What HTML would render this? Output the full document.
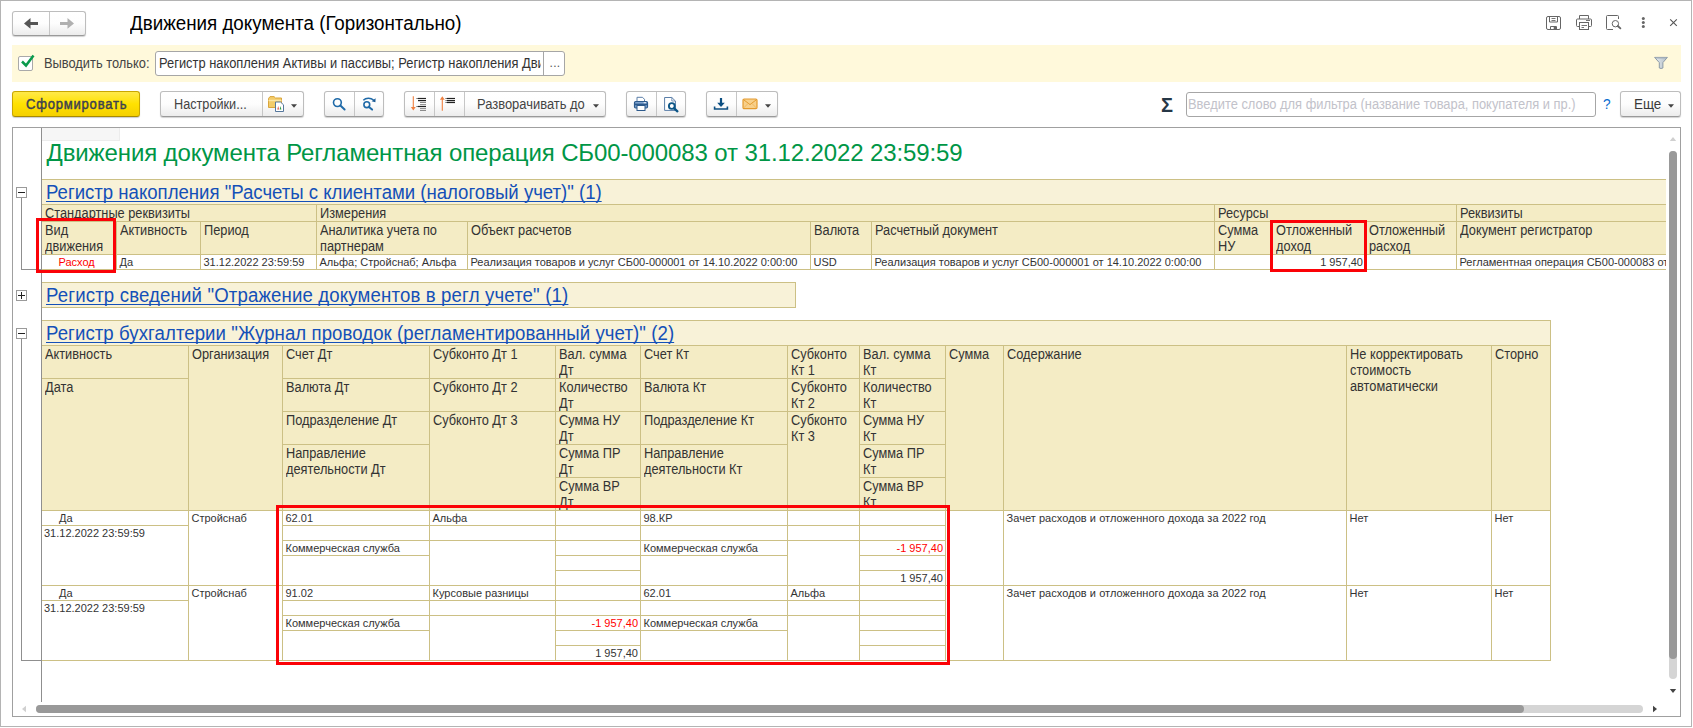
<!DOCTYPE html><html lang="ru"><head><meta charset="utf-8"><title>Движения документа (Горизонтально)</title><style>
html,body{margin:0;padding:0;background:#fff;}
body{width:1693px;height:728px;position:relative;overflow:hidden;font-family:"Liberation Sans",sans-serif;}
div,span,svg{position:absolute;box-sizing:border-box;}
.btn{border:1px solid #bdbdbd;border-bottom-color:#9a9a9a;border-radius:3px;background:linear-gradient(#ffffff 0%,#fdfdfd 50%,#ececec 100%);box-shadow:0 1px 1px rgba(0,0,0,0.18);}
.sep{background:#c6c6c6;width:1px;}
.ui{font-size:14px;color:#333;white-space:nowrap;line-height:16px;transform-origin:0 0;transform:scaleX(0.915);}
.c{overflow:hidden;white-space:nowrap;}
.h{background:#f4ecc5;color:#333;overflow:hidden;}
.h span{position:static;display:block;white-space:nowrap;font-size:14px;line-height:16px;transform-origin:0 0;transform:scaleX(0.913);}
.d{background:#fff;font-size:11px;line-height:13px;color:#333;overflow:hidden;white-space:nowrap;}
.ln{background:#ccc085;}
.lnk{font-size:19.5px;color:#1450b8;text-decoration-skip-ink:none;white-space:nowrap;text-decoration:underline;text-decoration-thickness:1px;text-underline-offset:2px;line-height:22px;}
.red{color:#ff0000;}
</style></head><body>
<div style="left:0px;top:0px;width:1692px;height:727px;border:1px solid #b4b4b4;"></div>
<div class="btn" style="left:12px;top:11px;width:74px;height:25px;"></div>
<div class="sep" style="left:49px;top:12px;width:1px;height:23px;"></div>
<svg style="left:22px;top:16px" width="18" height="14" viewBox="0 0 18 14"><path d="M2 7.4 L8.5 2 V5.9 H16 V8.9 H8.5 V12.8 Z" fill="#555"/></svg>
<svg style="left:58px;top:16px" width="18" height="14" viewBox="0 0 18 14"><path d="M16 7.4 L9.5 2 V5.9 H2 V8.9 H9.5 V12.8 Z" fill="#b0b0b0"/></svg>
<div style="left:130px;top:11px;width:600px;height:24px;font-size:19.5px;line-height:24px;color:#000;white-space:nowrap;transform-origin:0 0;transform:scaleX(0.9626);">Движения документа (Горизонтально)</div>
<div style="left:12px;top:45px;width:1669px;height:37px;background:#fff9db;"></div>
<div style="left:18px;top:56px;width:15px;height:15px;background:#fff;border:1px solid #a9a9a9;border-radius:2px;"></div>
<svg style="left:19px;top:53px" width="18" height="16" viewBox="0 0 18 16"><path d="M3 8.5 L7 12.5 L14.5 2.5" fill="none" stroke="#0a9a4c" stroke-width="2.5"/></svg>
<div class="ui" style="left:43.6px;top:55px;width:130px;height:16px;transform:scaleX(0.918);color:#444;">Выводить только:</div>
<div style="left:155px;top:51px;width:410px;height:25px;background:#fff;border:1px solid #a6a6a6;border-radius:3px;"></div>
<div style="left:543px;top:52px;width:1px;height:23px;background:#a6a6a6;"></div>
<div class="ui" style="left:159px;top:55px;width:415.3px;height:16px;overflow:hidden;transform:scaleX(0.9197);">Регистр накопления Активы и пассивы; Регистр накопления Движения</div>
<div class="ui" style="left:549.6px;top:55px;width:14px;height:16px;transform:none;font-size:12px;letter-spacing:0.3px;color:#555;">...</div>
<div style="left:12px;top:91px;width:128px;height:26px;border:1px solid #c9a700;border-bottom-color:#a88a00;border-radius:3px;background:linear-gradient(#ffe94a 0%,#ffe100 50%,#f5d000 100%);box-shadow:0 1px 1px rgba(0,0,0,0.2);"></div>
<div class="ui" style="left:26.4px;top:96px;width:128px;height:16px;transform:scaleX(0.93);color:#3c4150;letter-spacing:0.85px;-webkit-text-stroke:0.45px #3c4150;">Сформировать</div>
<div class="btn" style="left:160px;top:91px;width:144px;height:26px;"></div>
<div class="sep" style="left:262px;top:92px;width:1px;height:24px;"></div>
<div class="ui" style="left:174.2px;top:96px;width:90px;height:16px;transform:scaleX(0.905);color:#444;">Настройки...</div>
<div class="btn" style="left:324px;top:91px;width:60px;height:26px;"></div>
<div class="sep" style="left:354px;top:92px;width:1px;height:24px;"></div>
<div class="btn" style="left:404px;top:91px;width:202px;height:26px;"></div>
<div class="sep" style="left:434px;top:92px;width:1px;height:24px;"></div>
<div class="sep" style="left:464px;top:92px;width:1px;height:24px;"></div>
<div class="ui" style="left:477.2px;top:96px;width:130px;height:16px;transform:scaleX(0.924);color:#444;">Разворачивать до</div>
<div class="btn" style="left:626px;top:91px;width:60px;height:26px;"></div>
<div class="sep" style="left:656px;top:92px;width:1px;height:24px;"></div>
<div class="btn" style="left:706px;top:91px;width:72px;height:26px;"></div>
<div class="sep" style="left:736px;top:92px;width:1px;height:24px;"></div>
<div style="left:1161px;top:93px;width:14px;height:24px;font-size:20px;font-weight:bold;line-height:24px;color:#263746;">Σ</div>
<div style="left:1186px;top:92px;width:410px;height:25px;background:#fff;border:1px solid #a6a6a6;border-radius:3px;"></div>
<div class="ui" style="left:1188.2px;top:96px;width:440px;height:16px;color:#c2c2ca;transform:scaleX(0.92);">Введите слово для фильтра (название товара, покупателя и пр.)</div>
<div class="ui" style="left:1602.5px;top:96px;width:10px;height:16px;color:#0a6ccf;transform:scaleX(0.98);">?</div>
<div class="btn" style="left:1620px;top:91px;width:61px;height:26px;"></div>
<div class="ui" style="left:1633.6px;top:96px;width:30px;height:16px;transform:scaleX(0.96);color:#3a3a3a;">Еще</div>
<div style="left:12px;top:127px;width:1669px;height:590px;border:1px solid #a0a0a0;background:#fff;"></div>
<div id="sheet" style="left:0;top:0;width:1666px;height:702px;overflow:hidden;">
<div style="left:42px;top:128px;width:78px;height:13px;background:#f6f6f6;border-right:1px solid #ececec;border-bottom:1px solid #ececec;"></div>
<div style="left:46.5px;top:138.18px;font-size:24px;line-height:29px;white-space:nowrap;color:#009646;letter-spacing:-0.113px;">Движения документа Регламентная операция СБ00-000083 от 31.12.2022 23:59:59</div>
<div style="left:42px;top:179px;width:1759px;height:26px;background:#ccc085;"></div>
<div style="left:42px;top:180px;width:1758px;height:24px;background:#f8f2d8;"></div>
<div class="lnk" style="left:46.3px;top:181.14px;font-size:19.5px;line-height:22px;white-space:nowrap;letter-spacing:-0.017px;transform-origin:0 0;transform:scaleX(0.954);">Регистр накопления "Расчеты с клиентами (налоговый учет)" (1)</div>
<div style="left:42px;top:204px;width:1800px;height:66px;background:#ccc085;"></div>
<div class="h" style="left:42px;top:205px;width:274px;height:16px;padding:0px 0px 0 3px;"><span>Стандартные реквизиты</span></div>
<div class="h" style="left:317px;top:205px;width:897px;height:16px;padding:0px 0px 0 3px;"><span>Измерения</span></div>
<div class="h" style="left:1215px;top:205px;width:241px;height:16px;padding:0px 0px 0 3px;"><span>Ресурсы</span></div>
<div class="h" style="left:1457px;top:205px;width:343px;height:16px;padding:0px 0px 0 3px;"><span>Реквизиты</span></div>
<div class="h" style="left:42px;top:222px;width:74px;height:32px;padding:0px 0px 0 3px;"><span>Вид<br>движения</span></div>
<div class="d" style="left:42px;top:255px;width:74px;height:14px;padding:1px 2px 0 2.5px;"><span class="red" style="position:static;padding-left:14px">Расход</span></div>
<div class="h" style="left:117px;top:222px;width:83px;height:32px;padding:0px 0px 0 3px;"><span>Активность</span></div>
<div class="d" style="left:117px;top:255px;width:83px;height:14px;padding:1px 2px 0 2.5px;">Да</div>
<div class="h" style="left:201px;top:222px;width:115px;height:32px;padding:0px 0px 0 3px;"><span>Период</span></div>
<div class="d" style="left:201px;top:255px;width:115px;height:14px;padding:1px 2px 0 2.5px;">31.12.2022 23:59:59</div>
<div class="h" style="left:317px;top:222px;width:150px;height:32px;padding:0px 0px 0 3px;"><span>Аналитика учета по<br>партнерам</span></div>
<div class="d" style="left:317px;top:255px;width:150px;height:14px;padding:1px 2px 0 2.5px;">Альфа; Стройснаб; Альфа</div>
<div class="h" style="left:468px;top:222px;width:342px;height:32px;padding:0px 0px 0 3px;"><span>Объект расчетов</span></div>
<div class="d" style="left:468px;top:255px;width:342px;height:14px;padding:1px 2px 0 2.5px;">Реализация товаров и услуг СБ00-000001 от 14.10.2022 0:00:00</div>
<div class="h" style="left:811px;top:222px;width:60px;height:32px;padding:0px 0px 0 3px;"><span>Валюта</span></div>
<div class="d" style="left:811px;top:255px;width:60px;height:14px;padding:1px 2px 0 2.5px;">USD</div>
<div class="h" style="left:872px;top:222px;width:342px;height:32px;padding:0px 0px 0 3px;"><span>Расчетный документ</span></div>
<div class="d" style="left:872px;top:255px;width:342px;height:14px;padding:1px 2px 0 2.5px;">Реализация товаров и услуг СБ00-000001 от 14.10.2022 0:00:00</div>
<div class="h" style="left:1215px;top:222px;width:57px;height:32px;padding:0px 0px 0 3px;"><span>Сумма<br>НУ</span></div>
<div class="d" style="left:1215px;top:255px;width:57px;height:14px;padding:1px 2px 0 2.5px;"></div>
<div class="h" style="left:1273px;top:222px;width:92px;height:32px;padding:0px 0px 0 3px;"><span>Отложенный<br>доход</span></div>
<div class="d" style="left:1273px;top:255px;width:92px;height:14px;padding:1px 2px 0 2.5px;text-align:right;">1 957,40</div>
<div class="h" style="left:1366px;top:222px;width:90px;height:32px;padding:0px 0px 0 3px;"><span>Отложенный<br>расход</span></div>
<div class="d" style="left:1366px;top:255px;width:90px;height:14px;padding:1px 2px 0 2.5px;"></div>
<div class="h" style="left:1457px;top:222px;width:343px;height:32px;padding:0px 0px 0 3px;"><span>Документ регистратор</span></div>
<div class="d" style="left:1457px;top:255px;width:343px;height:14px;padding:1px 2px 0 2.5px;">Регламентная операция СБ00-000083 от 31.12.2022 23:59:59</div>
<div style="left:42px;top:282px;width:754px;height:26px;background:#ccc085;"></div>
<div style="left:42px;top:283px;width:753px;height:24px;background:#f8f2d8;"></div>
<div class="lnk" style="left:46.3px;top:284.14px;font-size:19.5px;line-height:22px;white-space:nowrap;letter-spacing:0.160px;transform-origin:0 0;transform:scaleX(0.954);">Регистр сведений "Отражение документов в регл учете" (1)</div>
<div style="left:42px;top:320px;width:1509px;height:26px;background:#ccc085;"></div>
<div style="left:42px;top:321px;width:1508px;height:24px;background:#f8f2d8;"></div>
<div class="lnk" style="left:46.3px;top:322.14px;font-size:19.5px;line-height:22px;white-space:nowrap;letter-spacing:0.076px;transform-origin:0 0;transform:scaleX(0.954);">Регистр бухгалтерии "Журнал проводок (регламентированный учет)" (2)</div>
<div style="left:42px;top:345px;width:1509px;height:316px;background:#ccc085;"></div>
<div class="h" style="left:42px;top:346px;width:146px;height:32px;padding:0px 0px 0 3px;"><span>Активность</span></div>
<div class="h" style="left:42px;top:379px;width:146px;height:131px;padding:0px 0px 0 3px;"><span>Дата</span></div>
<div class="h" style="left:189px;top:346px;width:93px;height:164px;padding:0px 0px 0 3px;"><span>Организация</span></div>
<div class="h" style="left:283px;top:346px;width:146px;height:32px;padding:0px 0px 0 3px;"><span>Счет Дт</span></div>
<div class="h" style="left:283px;top:379px;width:146px;height:32px;padding:0px 0px 0 3px;"><span>Валюта Дт</span></div>
<div class="h" style="left:283px;top:412px;width:146px;height:32px;padding:0px 0px 0 3px;"><span>Подразделение Дт</span></div>
<div class="h" style="left:283px;top:445px;width:146px;height:65px;padding:0px 0px 0 3px;"><span>Направление<br>деятельности Дт</span></div>
<div class="h" style="left:430px;top:346px;width:125px;height:32px;padding:0px 0px 0 3px;"><span>Субконто Дт 1</span></div>
<div class="h" style="left:430px;top:379px;width:125px;height:32px;padding:0px 0px 0 3px;"><span>Субконто Дт 2</span></div>
<div class="h" style="left:430px;top:412px;width:125px;height:98px;padding:0px 0px 0 3px;"><span>Субконто Дт 3</span></div>
<div class="h" style="left:556px;top:346px;width:84px;height:32px;padding:0px 0px 0 3px;"><span>Вал. сумма<br>Дт</span></div>
<div class="h" style="left:556px;top:379px;width:84px;height:32px;padding:0px 0px 0 3px;"><span>Количество<br>Дт</span></div>
<div class="h" style="left:556px;top:412px;width:84px;height:32px;padding:0px 0px 0 3px;"><span>Сумма НУ<br>Дт</span></div>
<div class="h" style="left:556px;top:445px;width:84px;height:32px;padding:0px 0px 0 3px;"><span>Сумма ПР<br>Дт</span></div>
<div class="h" style="left:556px;top:478px;width:84px;height:32px;padding:0px 0px 0 3px;"><span>Сумма ВР<br>Дт</span></div>
<div class="h" style="left:641px;top:346px;width:146px;height:32px;padding:0px 0px 0 3px;"><span>Счет Кт</span></div>
<div class="h" style="left:641px;top:379px;width:146px;height:32px;padding:0px 0px 0 3px;"><span>Валюта Кт</span></div>
<div class="h" style="left:641px;top:412px;width:146px;height:32px;padding:0px 0px 0 3px;"><span>Подразделение Кт</span></div>
<div class="h" style="left:641px;top:445px;width:146px;height:65px;padding:0px 0px 0 3px;"><span>Направление<br>деятельности Кт</span></div>
<div class="h" style="left:788px;top:346px;width:71px;height:32px;padding:0px 0px 0 3px;"><span>Субконто<br>Кт 1</span></div>
<div class="h" style="left:788px;top:379px;width:71px;height:32px;padding:0px 0px 0 3px;"><span>Субконто<br>Кт 2</span></div>
<div class="h" style="left:788px;top:412px;width:71px;height:98px;padding:0px 0px 0 3px;"><span>Субконто<br>Кт 3</span></div>
<div class="h" style="left:860px;top:346px;width:85px;height:32px;padding:0px 0px 0 3px;"><span>Вал. сумма<br>Кт</span></div>
<div class="h" style="left:860px;top:379px;width:85px;height:32px;padding:0px 0px 0 3px;"><span>Количество<br>Кт</span></div>
<div class="h" style="left:860px;top:412px;width:85px;height:32px;padding:0px 0px 0 3px;"><span>Сумма НУ<br>Кт</span></div>
<div class="h" style="left:860px;top:445px;width:85px;height:32px;padding:0px 0px 0 3px;"><span>Сумма ПР<br>Кт</span></div>
<div class="h" style="left:860px;top:478px;width:85px;height:32px;padding:0px 0px 0 3px;"><span>Сумма ВР<br>Кт</span></div>
<div class="h" style="left:946px;top:346px;width:57px;height:164px;padding:0px 0px 0 3px;"><span>Сумма</span></div>
<div class="h" style="left:1004px;top:346px;width:342px;height:164px;padding:0px 0px 0 3px;"><span>Содержание</span></div>
<div class="h" style="left:1347px;top:346px;width:144px;height:164px;padding:0px 0px 0 3px;"><span>Не корректировать<br>стоимость<br>автоматически</span></div>
<div class="h" style="left:1492px;top:346px;width:58px;height:164px;padding:0px 0px 0 3px;"><span>Сторно</span></div>
<div class="d" style="left:42px;top:511px;width:146px;height:14px;padding:1px 2px 0 17px;">Да</div>
<div class="d" style="left:42px;top:526px;width:146px;height:59px;padding:1px 2px 0 2px;">31.12.2022 23:59:59</div>
<div class="d" style="left:189px;top:511px;width:93px;height:74px;padding:1px 2px 0 2.5px;">Стройснаб</div>
<div class="d" style="left:283px;top:511px;width:146px;height:14px;padding:1px 2px 0 2.5px;">62.01</div>
<div class="d" style="left:283px;top:526px;width:146px;height:14px;padding:1px 2px 0 2.5px;"></div>
<div class="d" style="left:283px;top:541px;width:146px;height:14px;padding:1px 2px 0 2.5px;">Коммерческая служба</div>
<div class="d" style="left:283px;top:556px;width:146px;height:29px;padding:1px 2px 0 2.5px;"></div>
<div class="d" style="left:430px;top:511px;width:125px;height:14px;padding:1px 2px 0 2.5px;">Альфа</div>
<div class="d" style="left:430px;top:526px;width:125px;height:14px;padding:1px 2px 0 2.5px;"></div>
<div class="d" style="left:430px;top:541px;width:125px;height:44px;padding:1px 2px 0 2.5px;"></div>
<div class="d" style="left:556px;top:511px;width:84px;height:14px;padding:1px 2px 0 2.5px;text-align:right;"></div>
<div class="d" style="left:556px;top:526px;width:84px;height:14px;padding:1px 2px 0 2.5px;text-align:right;"></div>
<div class="d" style="left:556px;top:541px;width:84px;height:14px;padding:1px 2px 0 2.5px;text-align:right;"></div>
<div class="d" style="left:556px;top:556px;width:84px;height:14px;padding:1px 2px 0 2.5px;text-align:right;"></div>
<div class="d" style="left:556px;top:571px;width:84px;height:14px;padding:1px 2px 0 2.5px;text-align:right;"></div>
<div class="d" style="left:641px;top:511px;width:146px;height:14px;padding:1px 2px 0 2.5px;">98.КР</div>
<div class="d" style="left:641px;top:526px;width:146px;height:14px;padding:1px 2px 0 2.5px;"></div>
<div class="d" style="left:641px;top:541px;width:146px;height:14px;padding:1px 2px 0 2.5px;">Коммерческая служба</div>
<div class="d" style="left:641px;top:556px;width:146px;height:29px;padding:1px 2px 0 2.5px;"></div>
<div class="d" style="left:788px;top:511px;width:71px;height:14px;padding:1px 2px 0 2.5px;"></div>
<div class="d" style="left:788px;top:526px;width:71px;height:14px;padding:1px 2px 0 2.5px;"></div>
<div class="d" style="left:788px;top:541px;width:71px;height:44px;padding:1px 2px 0 2.5px;"></div>
<div class="d" style="left:860px;top:511px;width:85px;height:14px;padding:1px 2px 0 2.5px;text-align:right;"></div>
<div class="d" style="left:860px;top:526px;width:85px;height:14px;padding:1px 2px 0 2.5px;text-align:right;"></div>
<div class="d" style="left:860px;top:541px;width:85px;height:14px;padding:1px 2px 0 2.5px;text-align:right;"><span class="red" style="position:static">-1 957,40</span></div>
<div class="d" style="left:860px;top:556px;width:85px;height:14px;padding:1px 2px 0 2.5px;text-align:right;"></div>
<div class="d" style="left:860px;top:571px;width:85px;height:14px;padding:1px 2px 0 2.5px;text-align:right;">1 957,40</div>
<div class="d" style="left:946px;top:511px;width:57px;height:74px;padding:1px 2px 0 2.5px;"></div>
<div class="d" style="left:1004px;top:511px;width:342px;height:74px;padding:1px 2px 0 2.5px;letter-spacing:0.055px;">Зачет расходов и отложенного дохода за 2022 год</div>
<div class="d" style="left:1347px;top:511px;width:144px;height:74px;padding:1px 2px 0 2.5px;">Нет</div>
<div class="d" style="left:1492px;top:511px;width:58px;height:74px;padding:1px 2px 0 2.5px;">Нет</div>
<div class="d" style="left:42px;top:586px;width:146px;height:14px;padding:1px 2px 0 17px;">Да</div>
<div class="d" style="left:42px;top:601px;width:146px;height:59px;padding:1px 2px 0 2px;">31.12.2022 23:59:59</div>
<div class="d" style="left:189px;top:586px;width:93px;height:74px;padding:1px 2px 0 2.5px;">Стройснаб</div>
<div class="d" style="left:283px;top:586px;width:146px;height:14px;padding:1px 2px 0 2.5px;">91.02</div>
<div class="d" style="left:283px;top:601px;width:146px;height:14px;padding:1px 2px 0 2.5px;"></div>
<div class="d" style="left:283px;top:616px;width:146px;height:14px;padding:1px 2px 0 2.5px;">Коммерческая служба</div>
<div class="d" style="left:283px;top:631px;width:146px;height:29px;padding:1px 2px 0 2.5px;"></div>
<div class="d" style="left:430px;top:586px;width:125px;height:14px;padding:1px 2px 0 2.5px;">Курсовые разницы</div>
<div class="d" style="left:430px;top:601px;width:125px;height:14px;padding:1px 2px 0 2.5px;"></div>
<div class="d" style="left:430px;top:616px;width:125px;height:44px;padding:1px 2px 0 2.5px;"></div>
<div class="d" style="left:556px;top:586px;width:84px;height:14px;padding:1px 2px 0 2.5px;text-align:right;"></div>
<div class="d" style="left:556px;top:601px;width:84px;height:14px;padding:1px 2px 0 2.5px;text-align:right;"></div>
<div class="d" style="left:556px;top:616px;width:84px;height:14px;padding:1px 2px 0 2.5px;text-align:right;"><span class="red" style="position:static">-1 957,40</span></div>
<div class="d" style="left:556px;top:631px;width:84px;height:14px;padding:1px 2px 0 2.5px;text-align:right;"></div>
<div class="d" style="left:556px;top:646px;width:84px;height:14px;padding:1px 2px 0 2.5px;text-align:right;">1 957,40</div>
<div class="d" style="left:641px;top:586px;width:146px;height:14px;padding:1px 2px 0 2.5px;">62.01</div>
<div class="d" style="left:641px;top:601px;width:146px;height:14px;padding:1px 2px 0 2.5px;"></div>
<div class="d" style="left:641px;top:616px;width:146px;height:14px;padding:1px 2px 0 2.5px;">Коммерческая служба</div>
<div class="d" style="left:641px;top:631px;width:146px;height:29px;padding:1px 2px 0 2.5px;"></div>
<div class="d" style="left:788px;top:586px;width:71px;height:14px;padding:1px 2px 0 2.5px;">Альфа</div>
<div class="d" style="left:788px;top:601px;width:71px;height:14px;padding:1px 2px 0 2.5px;"></div>
<div class="d" style="left:788px;top:616px;width:71px;height:44px;padding:1px 2px 0 2.5px;"></div>
<div class="d" style="left:860px;top:586px;width:85px;height:14px;padding:1px 2px 0 2.5px;text-align:right;"></div>
<div class="d" style="left:860px;top:601px;width:85px;height:14px;padding:1px 2px 0 2.5px;text-align:right;"></div>
<div class="d" style="left:860px;top:616px;width:85px;height:14px;padding:1px 2px 0 2.5px;text-align:right;"></div>
<div class="d" style="left:860px;top:631px;width:85px;height:14px;padding:1px 2px 0 2.5px;text-align:right;"></div>
<div class="d" style="left:860px;top:646px;width:85px;height:14px;padding:1px 2px 0 2.5px;text-align:right;"></div>
<div class="d" style="left:946px;top:586px;width:57px;height:74px;padding:1px 2px 0 2.5px;"></div>
<div class="d" style="left:1004px;top:586px;width:342px;height:74px;padding:1px 2px 0 2.5px;letter-spacing:0.055px;">Зачет расходов и отложенного дохода за 2022 год</div>
<div class="d" style="left:1347px;top:586px;width:144px;height:74px;padding:1px 2px 0 2.5px;">Нет</div>
<div class="d" style="left:1492px;top:586px;width:58px;height:74px;padding:1px 2px 0 2.5px;">Нет</div>
</div>
<div style="left:41px;top:128px;width:1px;height:574px;background:#8f8f8f;"></div>
<div style="left:16px;top:187px;width:11px;height:11px;background:#fff;border:1px solid #9a9a9a;"></div>
<div style="left:18px;top:192px;width:7px;height:1px;background:#222;"></div>
<div style="left:21px;top:198px;width:1px;height:72px;background:#8f8f8f;"></div>
<div style="left:21px;top:269px;width:20px;height:1px;background:#8f8f8f;"></div>
<div style="left:16px;top:290px;width:11px;height:11px;background:#fff;border:1px solid #9a9a9a;"></div>
<div style="left:18px;top:295px;width:7px;height:1px;background:#222;"></div>
<div style="left:21px;top:292px;width:1px;height:7px;background:#222;"></div>
<div style="left:16px;top:328px;width:11px;height:11px;background:#fff;border:1px solid #9a9a9a;"></div>
<div style="left:18px;top:333px;width:7px;height:1px;background:#222;"></div>
<div style="left:21px;top:339px;width:1px;height:322px;background:#8f8f8f;"></div>
<div style="left:21px;top:660px;width:20px;height:1px;background:#8f8f8f;"></div>
<div style="left:36px;top:218px;width:80px;height:55px;border:3px solid #fb0207;"></div>
<div style="left:1270px;top:220px;width:97px;height:52px;border:3px solid #fb0207;"></div>
<div style="left:276px;top:505px;width:674px;height:160px;border:3px solid #fb0207;"></div>
<div style="left:1669px;top:151px;width:8px;height:528px;background:#d5d5d5;border-radius:4px;"></div>
<div style="left:1669px;top:151px;width:8px;height:508px;background:#999;border-radius:4px;"></div>
<svg style="left:1669px;top:136px" width="8" height="6" viewBox="0 0 8 6"><path d="M0.8 5 L4 1 L7.2 5 Z" fill="#d0d0d0"/></svg>
<svg style="left:1669px;top:688px" width="8" height="6" viewBox="0 0 8 6"><path d="M0.8 1 L4 5 L7.2 1 Z" fill="#444"/></svg>
<div style="left:36px;top:705px;width:1607px;height:8px;background:#d5d5d5;border-radius:4px;"></div>
<div style="left:36px;top:705px;width:1488px;height:8px;background:#999;border-radius:4px;"></div>
<svg style="left:21px;top:705px" width="6" height="8" viewBox="0 0 6 8"><path d="M5 0.8 L1 4 L5 7.2 Z" fill="#d0d0d0"/></svg>
<svg style="left:1652px;top:705px" width="6" height="8" viewBox="0 0 6 8"><path d="M1 0.8 L5 4 L1 7.2 Z" fill="#444"/></svg>
<!-- toolbar icons -->
<svg style="left:266px;top:94px" width="20" height="20" viewBox="0 0 20 20">
 <path d="M2.5 4.5 L4 2.6 H8 L9.5 4 H15.5 V13.5 H2.5 Z" fill="#f3cc6a" stroke="#d9a53c" stroke-width="1"/>
 <path d="M2.5 6.5 H15.5" stroke="#fbe6a6" stroke-width="1.4"/>
 <path d="M9.5 8 H14.5 L17.5 10.8 V17.5 H9.5 Z" fill="#fff" stroke="#55779c" stroke-width="1"/>
 <path d="M11.3 15.5 L12.2 12 L13 15.5 Z" fill="#e03c31"/><path d="M13.6 15.5 L14.5 12 L15.4 15.5 Z" fill="#2f9e48"/>
</svg>
<svg style="left:291px;top:103.6px" width="6" height="4" viewBox="0 0 6 4"><path d="M0 0.3 H6 L3 3.8 Z" fill="#444"/></svg>
<svg style="left:330px;top:95px" width="18" height="18" viewBox="0 0 18 18">
 <circle cx="7.4" cy="7.6" r="3.9" fill="none" stroke="#1f6aa8" stroke-width="1.6"/>
 <path d="M10.4 10.6 L14.6 14.5" stroke="#1f6aa8" stroke-width="2" stroke-linecap="round"/>
</svg>
<svg style="left:360px;top:95px" width="18" height="18" viewBox="0 0 18 18">
 <circle cx="6.8" cy="9.7" r="2.9" fill="none" stroke="#1f6aa8" stroke-width="1.6"/>
 <path d="M8.9 11.9 L12.1 14.6" stroke="#1f6aa8" stroke-width="2" stroke-linecap="round"/>
 <path d="M3.3 5.2 C6 2.6 10.5 2.4 13.6 5" fill="none" stroke="#1f6aa8" stroke-width="1.5"/>
 <path d="M15.6 3.2 L15.4 7.3 L11.6 6.2 Z" fill="#1a5a94"/>
</svg>
<svg style="left:408px;top:94px" width="22" height="20" viewBox="0 0 22 20">
 <path d="M5.3 2.2 V15" stroke="#f08040" stroke-width="1.1"/><path d="M2.9 13 H7.7 L5.3 16.6 Z" fill="#f08040"/>
 <g stroke="#222" stroke-width="1.2"><path d="M10 4.5 H18"/><path d="M10 6.6 H18"/><path d="M10 12.5 H18"/></g>
 <g stroke="#8a8a8a" stroke-width="1"><path d="M12 8.5 H18"/><path d="M12 10.6 H18"/><path d="M12 14.6 H18"/><path d="M12 16.5 H18"/></g>
 <g fill="#222"><rect x="8.6" y="4" width="1" height="1"/><rect x="8.6" y="12" width="1" height="1"/></g>
</svg>
<svg style="left:437px;top:94px" width="22" height="20" viewBox="0 0 22 20">
 <path d="M5.3 3.8 V16.7" stroke="#f08040" stroke-width="1.1"/><path d="M2.9 5.8 H7.7 L5.3 2.2 Z" fill="#f08040"/>
 <g stroke="#222" stroke-width="1.2"><path d="M10 4.5 H18"/><path d="M10 6.6 H18"/><path d="M10 8.5 H18"/></g>
 <g fill="#222"><rect x="8.6" y="4" width="1" height="1"/><rect x="8.6" y="6.1" width="1" height="1"/><rect x="8.6" y="8" width="1" height="1"/></g>
</svg>
<svg style="left:593px;top:103.6px" width="6" height="4" viewBox="0 0 6 4"><path d="M0 0.3 H6 L3 3.8 Z" fill="#444"/></svg>
<svg style="left:632px;top:95px" width="18" height="18" viewBox="0 0 18 18">
 <path d="M5 6 V2.3 H10.5 L12.5 4.3 V6" fill="#fff" stroke="#5a7ea8" stroke-width="1"/>
 <rect x="2.5" y="6.5" width="13" height="6.5" rx="1.2" fill="#7fa3cf" stroke="#2d5a8c" stroke-width="1.2"/>
 <rect x="3" y="8.6" width="12" height="1.6" fill="#2d5a8c"/>
 <rect x="5" y="10.5" width="8" height="5" fill="#fff" stroke="#2d5a8c" stroke-width="1"/>
 <rect x="11.6" y="7.3" width="2.4" height="0.9" fill="#fff"/>
</svg>
<svg style="left:662px;top:95px" width="18" height="18" viewBox="0 0 18 18">
 <path d="M2.6 2.5 H9.8 L13.4 6 V15.4 H2.6 Z" fill="#fff" stroke="#5a7ea8" stroke-width="1"/>
 <path d="M9.8 2.5 V6 H13.4" fill="none" stroke="#5a7ea8" stroke-width="0.8"/>
 <circle cx="9.8" cy="11" r="2.9" fill="#fff" stroke="#0c5687" stroke-width="1.9"/>
 <path d="M12.2 13.3 L15.4 16.3" stroke="#0c5687" stroke-width="2.3" stroke-linecap="round"/>
</svg>
<svg style="left:712px;top:95px" width="18" height="18" viewBox="0 0 18 18">
 <path d="M9 3 V9.4" stroke="#0c4f82" stroke-width="2.2"/><path d="M5.2 7.8 H12.8 L9 12 Z" fill="#0c4f82"/>
 <path d="M2.6 11.6 V14 H15.4 V11.6" fill="none" stroke="#0c4f82" stroke-width="1.6"/>
</svg>
<svg style="left:742px;top:98px" width="16" height="12" viewBox="0 0 16 12">
 <rect x="1" y="1" width="14" height="9.6" rx="1.2" fill="#f8d08a" stroke="#e39a2e" stroke-width="1.2"/>
 <path d="M1.5 1.6 L8 6.6 L14.5 1.6" fill="none" stroke="#e39a2e" stroke-width="1"/>
 <path d="M1.6 10 L6 5.5 M14.4 10 L10 5.5" stroke="#eeb55c" stroke-width="0.9"/>
</svg>
<svg style="left:765px;top:103.6px" width="6" height="4" viewBox="0 0 6 4"><path d="M0 0.3 H6 L3 3.8 Z" fill="#444"/></svg>
<svg style="left:1668px;top:103.6px" width="6" height="4" viewBox="0 0 6 4"><path d="M0 0.3 H6 L3 3.8 Z" fill="#444"/></svg>
<!-- top right icons -->
<svg style="left:1544px;top:14px" width="18" height="18" viewBox="0 0 18 18" fill="none" stroke="#666" stroke-width="1">
 <rect x="2.5" y="2.5" width="14" height="13" rx="1.5"/>
 <path d="M5.5 2.5 V8 H13.5 V2.5"/><path d="M7.5 4.5 H11.5 M7.5 6.5 H11.5" stroke-width="0.9"/>
 <path d="M6.5 15.5 V12.5 H12.5 V15.5"/><rect x="9.7" y="13" width="2.6" height="2.5" fill="#666" stroke="none"/>
</svg>
<svg style="left:1574px;top:13px" width="20" height="19" viewBox="0 0 20 19" fill="none" stroke="#666" stroke-width="1">
 <path d="M5.5 6 V2.5 H14.5 V6"/>
 <path d="M5.5 13.5 H3.5 Q2.5 13.5 2.5 12.5 V7 Q2.5 6 3.5 6 H16.5 Q17.5 6 17.5 7 V12.5 Q17.5 13.5 16.5 13.5 H14.5"/>
 <rect x="5.5" y="9.5" width="9" height="7" fill="#fff"/>
 <path d="M7.5 12.5 H13 M7.5 14.5 H10" stroke-width="0.9"/><path d="M12 7.5 H16" stroke-width="0.9"/>
</svg>
<svg style="left:1604px;top:13px" width="20" height="19" viewBox="0 0 20 19" fill="none" stroke="#666" stroke-width="1">
 <path d="M14.5 6 V3.5 Q14.5 2.5 13.5 2.5 H3.5 Q2.5 2.5 2.5 3.5 V15.5 Q2.5 16.5 3.5 16.5 H9"/>
 <circle cx="11.4" cy="10.7" r="3.2"/>
 <path d="M13.8 13 L16.4 15.4" stroke-width="1.8" stroke-linecap="round"/>
</svg>
<svg style="left:1640px;top:16px" width="7" height="13" viewBox="0 0 7 13"><g fill="#666"><circle cx="3.3" cy="2.5" r="1.5"/><circle cx="3.3" cy="6.5" r="1.5"/><circle cx="3.3" cy="10.6" r="1.5"/></g></svg>
<svg style="left:1668px;top:17px" width="11" height="11" viewBox="0 0 11 11"><path d="M2.2 2.3 L8.8 8.9 M8.8 2.3 L2.2 8.9" stroke="#555" stroke-width="1.1"/></svg>
<!-- funnel -->
<svg style="left:1653px;top:55px" width="16" height="15" viewBox="0 0 16 15">
 <defs><linearGradient id="fg" x1="0" y1="0" x2="1" y2="0"><stop offset="0" stop-color="#e6ebef"/><stop offset="1" stop-color="#b4bfc8"/></linearGradient></defs>
 <path d="M1.6 2.4 H14.4 L9.9 7.6 V13 Q8.1 14 6.3 13 V7.6 Z" fill="url(#fg)" stroke="#8d9ba7" stroke-width="1"/>
 <path d="M2.6 3 H13.4" stroke="#a7b3bd" stroke-width="1.1"/>
</svg>

</body></html>
